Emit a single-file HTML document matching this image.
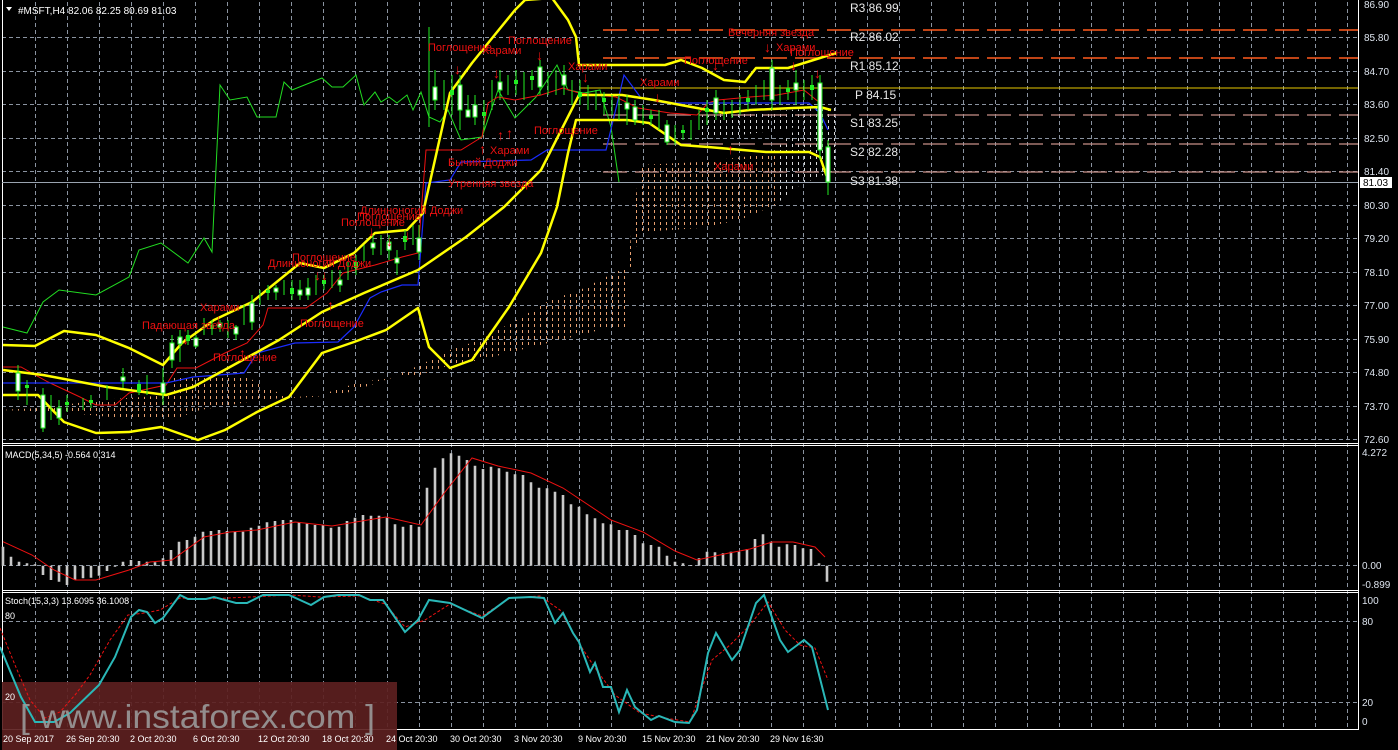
<!DOCTYPE html>
<html><head><meta charset="utf-8"><style>
html,body{margin:0;padding:0;background:#000;width:1398px;height:750px;overflow:hidden}
svg{display:block}
text{font-family:"Liberation Sans","DejaVu Sans",sans-serif}
</style></head><body>
<svg width="1398" height="750" viewBox="0 0 1398 750" xmlns="http://www.w3.org/2000/svg">
<defs>
<pattern id="hO" width="6" height="6" patternUnits="userSpaceOnUse"><rect x="0" y="0" width="1" height="3" fill="#e8a070"/></pattern>
<pattern id="hW" width="6" height="6" patternUnits="userSpaceOnUse"><rect x="0" y="0" width="1" height="3" fill="#d8d8d8"/></pattern>
</defs>
<rect width="1398" height="750" fill="#000"/>
<g stroke="#8a93a0" stroke-width="1" stroke-dasharray="4,3" fill="none">
<path d="M35.5 2V730M67.5 2V730M99.5 2V730M131.5 2V730M163.5 2V730M195.5 2V730M227.5 2V730M259.5 2V730M291.5 2V730M323.5 2V730M355.5 2V730M387.5 2V730M419.5 2V730M451.5 2V730M483.5 2V730M515.5 2V730M547.5 2V730M579.5 2V730M611.5 2V730M643.5 2V730M675.5 2V730M707.5 2V730M739.5 2V730M771.5 2V730M803.5 2V730M835.5 2V730M867.5 2V730M899.5 2V730M931.5 2V730M963.5 2V730M995.5 2V730M1027.5 2V730M1059.5 2V730M1091.5 2V730M1123.5 2V730M1155.5 2V730M1187.5 2V730M1219.5 2V730M1251.5 2V730M1283.5 2V730M1315.5 2V730M1347.5 2V730"/>
<path d="M2 37.5H1358M2 71.5H1358M2 104.5H1358M2 138.5H1358M2 171.5H1358M2 205.5H1358M2 238.5H1358M2 272.5H1358M2 305.5H1358M2 339.5H1358M2 372.5H1358M2 406.5H1358M2 439.5H1358M2 565.5H1358M2 621.5H1358M2 702.5H1358"/>
</g>
<g stroke="#fff" stroke-width="1" fill="none">
<path d="M1358.5 0V730"/>
<path d="M2 443.5H1358M2 445.5H1358M2 590.5H1358M2 592.5H1358M2 729.5H1358M2.5 0V730"/>
</g>
<polygon fill="url(#hO)" points="0,410 60,412 120,418 170,420 170,395 100,400 40,408"/>
<polygon fill="url(#hO)" points="172,377 245,375 265,388 295,398 340,395 380,382 420,365 450,350 480,340 520,318 550,300 580,290 610,275 625,268 625,330 600,330 560,340 520,350 480,360 450,365 420,375 360,382 320,395 260,400 200,410 172,420"/>
<polygon fill="url(#hO)" points="628,265 632,225 640,165 700,162 760,155 775,150 775,205 740,220 700,228 640,232 630,270"/>
<polygon fill="url(#hW)" points="775,150 800,125 820,110 835,105 835,170 800,185 775,205"/>
<polygon fill="url(#hW)" points="700,115 760,112 820,108 835,110 835,120 780,130 700,140"/>
<g fill="none" stroke-width="1.5">
<path d="M603 30H1358M603 58H1358" stroke="#ff5a1e" stroke-dasharray="24,8"/>
<path d="M580 88H1358" stroke="#e8c800" stroke-width="1"/>
<path d="M603 115H1358M603 144H1358M603 172H1358" stroke="#c89088" stroke-dasharray="24,8" stroke-width="1.2"/>
</g>
<path d="M2 182.5H1358" stroke="#9aa4b0" stroke-width="1"/>
<polyline fill="none" stroke="#22dd22" stroke-width="1" points="3,327 27,333 43,302 59,290 96,295 129,277 139,250 161,243 188,263 204,238 212,252 220,85 230,100 247,97 257,117 276,117 284,82 292,90 322,78 332,87 343,87 356,75 364,105 375,92 381,102 389,97 397,103 407,95 413,110 421,92 429,117 440,122 448,110 461,140 482,137 498,90 515,118 536,97 557,65 568,90 584,93 600,90 611,127 619,182"/>
<polyline fill="none" stroke="#ee1111" stroke-width="1" points="3,367 21,367 48,382 80,397 96,405 115,405 129,393 166,385 177,368 196,368 225,353 247,343 263,325 268,308 306,308 327,293 343,273 375,265 402,257 418,253 426,150 461,150 482,137 488,103 498,97 515,100 541,95 563,88 579,93 616,97 638,108 670,113 697,115 708,103 718,100 750,97 777,95 804,90 820,103"/>
<polyline fill="none" stroke="#1a2cff" stroke-width="1.2" points="3,383 43,383 166,383 193,377 244,373 257,353 295,343 338,342 354,327 370,298 381,292 402,285 418,285 426,183 450,180 461,162 531,160 547,150 606,150 624,75 641,98 665,103 750,103 809,103 820,113 828,130"/>
<g fill="none" stroke="#ffff00" stroke-width="2.5" stroke-linejoin="round">
<polyline points="3,345 35,346 64,331 96,335 129,348 163,365 182,343 214,320 252,302 300,263 324,268 354,253 375,233 407,230 423,213 450,93 472,63 493,37 515,10 525,0 552,-2 568,20 576,37 579,65 665,65 681,60 702,68 724,80 745,82 756,68 788,68 820,58 836,53"/>
<polyline points="3,370 43,375 107,387 166,395 193,387 230,367 279,340 322,312 364,293 418,270 466,237 504,207 541,170 579,95 622,95 654,100 697,108 724,113 750,110 793,108 820,107 831,110"/>
<polyline points="3,395 38,395 64,422 96,433 129,432 161,427 198,440 225,430 257,412 289,397 322,353 354,342 386,330 418,308 429,347 450,368 472,360 509,307 541,253 557,207 568,153 576,120 627,120 649,123 681,145 708,147 766,152 809,152 820,157 828,180"/>
</g>
<g stroke="#22ee22" stroke-width="1" fill="none">
<path d="M18 365V400M43 388V432M59 400V425M123 368V388M163 368V405M172 335V368M180 330V362M196 335V348M220 320V332M236 325V340M252 295V330M260 290V305M276 285V300M300 280V300M308 278V300M340 270V292M373 235V255M389 235V260M397 250V275M419 225V260M429 27V127M435 70V110M460 75V130M468 95V115M475 95V125M500 70V100M540 60V95M564 65V95M627 95V125M635 100V125M667 120V145M716 90V120M772 60V110M796 70V105M820 75V160M828 140V195M27 380V405M51 395V420M67 395V412M83 398V410M91 395V408M107 385V400M139 380V395M147 375V395M188 330V345M204 318V335M212 320V335M228 320V338M244 305V325M268 285V300M284 280V295M292 280V300M316 275V295M324 275V290M332 270V288M348 262V280M356 255V275M364 245V262M381 235V255M405 230V250M413 225V245M444 80V110M452 75V115M484 100V130M492 80V110M508 75V95M516 70V95M524 72V100M532 70V90M548 72V95M556 70V95M572 80V105M580 80V105M588 85V110M596 90V110M604 92V115M612 95V115M619 95V120M643 105V125M651 110V125M659 110V130M675 125V145M683 125V140M691 120V140M699 110V130M707 100V125M724 100V120M732 100V118M740 95V115M748 90V110M756 85V105M764 80V100M780 85V105M788 80V100M804 80V100M812 75V100"/>
</g>
<g stroke="#22ee22" stroke-width="1" fill="#fff">
<rect x="16" y="373" width="4" height="18"/><rect x="41" y="395" width="4" height="33"/><rect x="57" y="408" width="4" height="10"/><rect x="121" y="377" width="4" height="4"/><rect x="161" y="383" width="4" height="10"/><rect x="170" y="343" width="4" height="17"/><rect x="178" y="337" width="4" height="7"/><rect x="194" y="338" width="4" height="8"/><rect x="218" y="323" width="4" height="4"/><rect x="234" y="327" width="4" height="7"/><rect x="250" y="303" width="4" height="19"/><rect x="274" y="288" width="4" height="4"/><rect x="298" y="290" width="4" height="5"/><rect x="306" y="288" width="4" height="7"/><rect x="338" y="280" width="4" height="5"/><rect x="371" y="243" width="4" height="5"/><rect x="387" y="242" width="4" height="8"/><rect x="395" y="258" width="4" height="5"/><rect x="417" y="238" width="4" height="14"/><rect x="433" y="87" width="4" height="13"/><rect x="458" y="85" width="4" height="25"/><rect x="466" y="110" width="4" height="7"/><rect x="473" y="105" width="4" height="12"/><rect x="498" y="82" width="4" height="8"/><rect x="538" y="67" width="4" height="20"/><rect x="562" y="75" width="4" height="10"/><rect x="625" y="103" width="4" height="6"/><rect x="633" y="107" width="4" height="13"/><rect x="665" y="125" width="4" height="17"/><rect x="714" y="98" width="4" height="15"/><rect x="770" y="68" width="4" height="32"/><rect x="794" y="83" width="4" height="7"/><rect x="818" y="83" width="4" height="67"/><rect x="826" y="147" width="4" height="35"/>
</g>
<g fill="#22ee22">
<rect x="25" y="385" width="4" height="3"/><rect x="65" y="402" width="4" height="3"/><rect x="89" y="400" width="4" height="3"/><rect x="137" y="384" width="4" height="8"/><rect x="186" y="335" width="4" height="6"/><rect x="210" y="325" width="4" height="4"/><rect x="266" y="290" width="4" height="3"/><rect x="290" y="288" width="4" height="6"/><rect x="322" y="280" width="4" height="4"/><rect x="354" y="262" width="4" height="6"/><rect x="403" y="236" width="4" height="6"/><rect x="450" y="90" width="4" height="5"/><rect x="482" y="112" width="4" height="4"/><rect x="514" y="80" width="4" height="4"/><rect x="530" y="76" width="4" height="4"/><rect x="578" y="92" width="4" height="5"/><rect x="602" y="98" width="4" height="4"/><rect x="649" y="115" width="4" height="4"/><rect x="681" y="130" width="4" height="3"/><rect x="705" y="108" width="4" height="4"/><rect x="746" y="98" width="4" height="4"/><rect x="786" y="88" width="4" height="4"/><rect x="810" y="85" width="4" height="5"/>
</g>
<g fill="#ee1111" font-size="11">
<text x="428" y="51">Поглощение</text><text x="482" y="54">Харами</text><text x="508" y="44">Поглощение</text><text x="568" y="70">Харами</text><text x="728" y="36">Вечерняя звезда</text><text x="776" y="51">Харами</text><text x="790" y="56">Поглощение</text><text x="684" y="64">Поглощение</text><text x="640" y="86">Харами</text><text x="534" y="134">Поглощение</text><text x="490" y="154">Харами</text><text x="448" y="166">Бычий Доджи</text><text x="448" y="187">Утренняя звезда</text><text x="714" y="170">Харами</text><text x="360" y="214">Длинноногий Доджи</text><text x="357" y="220">Поглощение</text><text x="341" y="226">Поглощение</text><text x="292" y="261">Поглощение</text><text x="268" y="267">Длинноногий Доджи</text><text x="200" y="311">Харами</text><text x="142" y="329">Падающая звезда</text><text x="300" y="327">Поглощение</text><text x="213" y="361">Поглощение</text>
</g>
<g fill="#ee1111" font-size="14" font-weight="bold">
<text x="454" y="74">↓</text><text x="493" y="78">↓</text><text x="536" y="60">↓</text><text x="582" y="82">↓</text><text x="712" y="70">↓</text><text x="764" y="52">↓</text><text x="790" y="70">↓</text><text x="814" y="78">↓</text><text x="654" y="102">↓</text><text x="479" y="154">↑</text><text x="497" y="140">↑</text><text x="506" y="138">↑</text><text x="727" y="154">↑</text><text x="368" y="236">↓</text><text x="386" y="246">↓</text><text x="404" y="240">↓</text><text x="314" y="280">↓</text><text x="321" y="280">↓</text><text x="215" y="324">↓</text><text x="182" y="344">↓</text><text x="327" y="310">↑</text><text x="239" y="358">↑</text>
</g>
<g fill="#e8e8e8" font-size="12" font-family="Liberation Mono,monospace">
<text x="850" y="12">R3  86.99</text><text x="850" y="41">R2  86.02</text><text x="850" y="70">R1  85.12</text><text x="855" y="99">P  84.15</text><text x="850" y="127">S1  83.25</text><text x="850" y="156">S2  82.28</text><text x="850" y="185">S3  81.38</text>
</g>
<path d="M6 7H12L9 11Z" fill="#fff"/>
<text x="18" y="14" fill="#fff" font-size="10">#MSFT,H4  82.06 82.25 80.69 81.03</text>
<g fill="#dde4ee" font-size="10">
<text x="1364" y="8">86.90</text><text x="1364" y="41">85.80</text><text x="1364" y="75">84.70</text><text x="1364" y="108">83.60</text><text x="1364" y="142">82.50</text><text x="1364" y="175">81.40</text><text x="1364" y="209">80.30</text><text x="1364" y="242">79.20</text><text x="1364" y="276">78.10</text><text x="1364" y="309">77.00</text><text x="1364" y="343">75.90</text><text x="1364" y="376">74.80</text><text x="1364" y="410">73.70</text><text x="1364" y="443">72.60</text>
<text x="1362" y="456">4.272</text><text x="1362" y="569">0.00</text><text x="1362" y="588">-0.899</text>
<text x="1362" y="604">100</text><text x="1362" y="625">80</text><text x="1362" y="706">20</text><text x="1362" y="725">0</text>
</g>
<rect x="1360" y="177" width="32" height="11" fill="#fff"/>
<text x="1363" y="186" fill="#000" font-size="10">81.03</text>
<text x="5" y="458" fill="#fff" font-size="9">MACD(5,34,5) -0.564 0.314</text>
<path fill="none" stroke="#c8c8c8" stroke-width="2.6" d="M3 565.7V546.7M11 565.7V556.7M19 565.7V561.7M27 565.7V563.3M35 565.7V564.3M43 565.7V575M51 565.7V580M59 565.7V581.7M67 565.7V585M75 565.7V580M83 565.7V578.3M91 565.7V577.7M99 565.7V575.7M107 565.7V571M115 565.7V566.7M123 565.7V561.7M131 565.7V560M139 565.7V561M147 565.7V561.7M155 565.7V562.3M163 565.7V558.3M171 565.7V550M179 565.7V541.7M187 565.7V540M195 565.7V536.7M203 565.7V531.7M211 565.7V531M219 565.7V530M227 565.7V531M235 565.7V531.7M243 565.7V531.7M251 565.7V527.7M259 565.7V525.7M267 565.7V522.3M275 565.7V521M283 565.7V520M291 565.7V520M299 565.7V522.3M307 565.7V523.7M315 565.7V525M323 565.7V525M331 565.7V527.7M339 565.7V526.7M347 565.7V521M355 565.7V517.7M363 565.7V515M371 565.7V515.7M379 565.7V515.7M387 565.7V517.7M395 565.7V524.3M403 565.7V526.7M411 565.7V525M419 565.7V526.7M427 565.7V487.7M435 565.7V467.7M443 565.7V458.3M451 565.7V453.3M459 565.7V455.7M467 565.7V460M475 565.7V465.7M483 565.7V469M491 565.7V466.7M499 565.7V468.3M507 565.7V471.7M515 565.7V474.3M523 565.7V475M531 565.7V482.3M539 565.7V487.7M547 565.7V488.3M555 565.7V491.7M563 565.7V495M571 565.7V504.3M579 565.7V506.7M587 565.7V514.3M595 565.7V518.3M603 565.7V523.3M611 565.7V524.3M619 565.7V530M627 565.7V530M635 565.7V535M643 565.7V543.3M651 565.7V545M659 565.7V546.7M667 565.7V555.7M675 565.7V561.7M683 565.7V563.3M691 565.7V565M699 565.7V558.3M707 565.7V551.7M715 565.7V552.3M723 565.7V553.3M731 565.7V551.7M739 565.7V551.7M747 565.7V549M755 565.7V539M763 565.7V534.3M771 565.7V541.7M779 565.7V546.7M787 565.7V544.3M795 565.7V545M803 565.7V548.3M811 565.7V549M819 565.7V563.3M827 565.7V581.7"/>
<polyline fill="none" stroke="#ee1111" stroke-width="1" points="3,541.7 32,555 54,570 75,580 96,580 129,570 150,562 172,560 204,537 230,532 257,530 295,522 332,526 386,517 421,525 445,492 472,458 498,466 531,473 563,488 611,520 643,532 675,551 697,560 729,553 750,549 772,542 793,542 815,547 825,557"/>
<rect x="2" y="682" width="395" height="68" fill="#5c1f1f" opacity="0.92"/>
<text x="5" y="604" fill="#fff" font-size="9">Stoch(15,3,3) 13.6095 36.1008</text>
<text x="5" y="619" fill="#fff" font-size="9">80</text>
<text x="5" y="700" fill="#fff" font-size="9">20</text>
<polyline fill="none" stroke="#ee1111" stroke-width="1" stroke-dasharray="3,2" points="0,628 15,665 30,700 45,718 60,712 75,695 90,675 110,640 128,615 145,613 160,610 180,598 206,599 250,597 290,595 320,597 360,596 385,604 405,627 425,620 450,604 482,616 510,598 540,596 560,610 575,637 595,668 615,695 640,713 665,718 690,722 712,660 730,645 750,625 768,602 785,630 800,645 815,648 828,680"/>
<polyline fill="none" stroke="#2ab8b8" stroke-width="2" points="0,647 21,697 35,722 54,722 70,713 99,685 115,657 131,617 139,610 147,612 155,623 163,618 180,595 188,599 206,599 214,597 236,603 247,603 263,595 289,595 311,605 324,597 338,595 359,595 370,600 383,600 405,632 418,620 429,600 450,603 482,618 509,598 531,597 544,598 555,623 563,613 573,633 579,642 590,672 595,663 603,687 611,687 619,712 627,690 635,707 651,720 659,716 675,722 689,723 697,710 708,653 716,633 732,660 740,650 756,603 764,595 780,640 788,652 804,640 812,647 828,710"/>
<text x="20" y="728" fill="#9a9a9a" font-size="33" opacity="0.9" textLength="355" lengthAdjust="spacingAndGlyphs">[ www.instaforex.com ]</text>
<g fill="#fff" font-size="9">
<text x="3" y="742">20 Sep 2017</text><text x="66" y="742">26 Sep 20:30</text><text x="130" y="742">2 Oct 20:30</text><text x="193" y="742">6 Oct 20:30</text><text x="258" y="742">12 Oct 20:30</text><text x="322" y="742">18 Oct 20:30</text><text x="386" y="742">24 Oct 20:30</text><text x="450" y="742">30 Oct 20:30</text><text x="514" y="742">3 Nov 20:30</text><text x="578" y="742">9 Nov 20:30</text><text x="642" y="742">15 Nov 20:30</text><text x="706" y="742">21 Nov 20:30</text><text x="770" y="742">29 Nov 16:30</text>
</g>
</svg>
</body></html>
